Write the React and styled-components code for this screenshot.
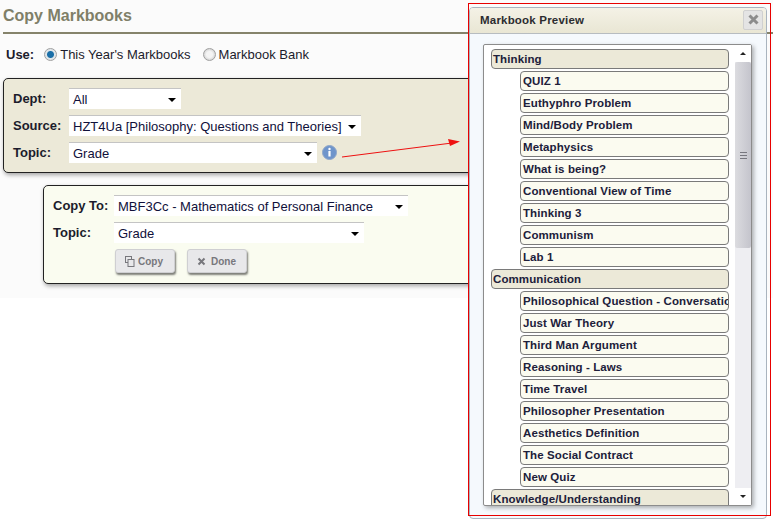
import styled, { createGlobalStyle } from 'styled-components';

const GlobalStyle = createGlobalStyle`
  html, body {
    margin: 0;
    padding: 0;
    background: #ffffff;
    font-family: "Liberation Sans", Arial, sans-serif;
    color: #1c1c2c;
  }
`;

const Page = styled.div`
  position: relative;
  width: 773px;
  height: 522px;
  overflow: hidden;
`;

const Content = styled.div`
  height: 298px;
  padding: 7px 0 0 3px;
  box-sizing: border-box;
  background: #fbfbfb;
`;

const Title = styled.h1`
  margin: 0;
  padding-bottom: 7px;
  border-bottom: 2px solid #85836b;
  font-size: 16px;
  line-height: 18px;
  font-weight: bold;
  color: #7f7f68;
`;

const UseRow = styled.div`
  display: flex;
  align-items: center;
  height: 20px;
  margin: 10px 0 14px 3px;
  font-size: 13px;
`;

const UseLabel = styled.span`
  font-weight: bold;
  font-size: 13px;
  margin-right: 10px;
`;

const Radio = styled.span`
  width: 11px;
  height: 11px;
  border-radius: 50%;
  margin-right: 3px;
  border: 1px solid #a0a0a0;
  background: ${p => (p.$checked ? 'radial-gradient(circle, #1a6fa8 0 3px, #dfe6ea 4px)' : 'radial-gradient(circle, #f4f4f4 0 3px, #d2d2d2 6px)')};
`;

const RadioText = styled.span`
  margin-right: 12px;
`;

const SourcePanel = styled.div`
  width: 600px;
  height: 95px;
  box-sizing: border-box;
  padding: 9px 0 0 9px;
  background: #ece9d8;
  border: 1px solid #222222;
  border-radius: 5px;
  box-shadow: 1px 2px 4px rgba(0, 0, 0, 0.35);
`;

const CopyPanel = styled.div`
  width: 600px;
  height: 99px;
  box-sizing: border-box;
  margin: 12px 0 0 40px;
  padding: 9px 0 0 9px;
  background: #fafcf0;
  border: 1px solid #222222;
  border-radius: 5px;
  box-shadow: 1px 2px 4px rgba(0, 0, 0, 0.35);
`;

const Row = styled.div`
  display: flex;
  align-items: center;
  height: 21px;
  margin-bottom: 6px;
`;

const Label = styled.label`
  width: ${p => p.$width}px;
  flex: none;
  font-size: 13px;
  font-weight: bold;
  color: #1c1c2c;
`;

const Select = styled.div`
  position: relative;
  display: flex;
  align-items: center;
  width: ${p => p.$width}px;
  height: 21px;
  box-sizing: border-box;
  padding-left: 4px;
  background: #ffffff;
  border-top: 1px solid #c4c4c4;
  font-size: 13px;
  color: #10103a;
  white-space: nowrap;
  &::after {
    content: '';
    position: absolute;
    right: 5px;
    top: 9px;
    border-left: 4px solid transparent;
    border-right: 4px solid transparent;
    border-top: 4px solid #000000;
  }
`;

const InfoIcon = styled.svg`
  margin-left: 5px;
  flex: none;
`;

const Buttons = styled.div`
  display: flex;
  gap: 12px;
  margin: 1px 0 0 62px;
`;

const Button = styled.button`
  display: flex;
  align-items: center;
  gap: ${p => p.$gap}px;
  width: 60px;
  height: 24px;
  padding: 0 0 0 9px;
  background: #e8e8ea;
  border: 1px solid #cfcfd2;
  border-radius: 3px;
  box-shadow: 1px 2px 2px rgba(0, 0, 0, 0.5);
  font-family: inherit;
  font-size: 10px;
  font-weight: bold;
  color: #77777c;
`;

const Arrow = styled.svg`
  position: absolute;
  left: 340px;
  top: 136px;
`;

const Dialog = styled.div`
  position: absolute;
  left: 469px;
  top: 7px;
  width: 298px;
  height: 512px;
  box-sizing: border-box;
  background: #f5f9fd;
  border: 1px solid #a9b4bf;
  border-radius: 4px;
`;

const Highlight = styled.div`
  position: absolute;
  left: 468px;
  top: 3px;
  width: 303px;
  height: 513px;
  box-sizing: border-box;
  border: 1px solid #e80000;
  pointer-events: none;
`;

const DialogHeader = styled.div`
  display: flex;
  align-items: center;
  justify-content: space-between;
  height: 26px;
  box-sizing: border-box;
  padding: 0 3px 2px 10px;
  background: linear-gradient(#f4f2e6, #e9e6d4);
  border-bottom: 1px solid #b7bcc0;
  border-radius: 3px 3px 0 0;
  font-size: 11.5px;
  font-weight: bold;
  letter-spacing: 0.2px;
  color: #2c2c30;
`;

const CloseButton = styled.button`
  display: flex;
  align-items: center;
  justify-content: center;
  width: 20px;
  height: 20px;
  padding: 0;
  background: #e4e4e4;
  border: 1px solid #d0d0d0;
  border-radius: 2px;
`;

const ListBox = styled.div`
  display: flex;
  width: 269px;
  height: 462px;
  margin: 10px 0 0 13px;
  box-sizing: border-box;
  background: #ffffff;
  border: 1px solid #8c8c8c;
  border-radius: 2px;
  box-shadow: 2px 2px 4px rgba(0, 0, 0, 0.3);
  overflow: hidden;
`;

const ListScroll = styled.div`
  flex: 1;
  min-width: 0;
  padding: 4px 6px 0 7px;
  overflow: hidden;
`;

const ListRow = styled.div`
  display: flex;
  align-items: center;
  height: 20px;
  box-sizing: border-box;
  margin: 0 0 2px ${p => (p.$group ? 0 : 29)}px;
  padding-left: ${p => (p.$group ? 1 : 2)}px;
  background: ${p => (p.$group ? '#ece9d8' : '#fbfbf0')};
  border: 1px solid #7a7a7a;
  border-radius: 4px;
  font-size: 11.5px;
  font-weight: bold;
  letter-spacing: 0.1px;
  color: #20203a;
  white-space: nowrap;
  overflow: hidden;
`;

const Scrollbar = styled.div`
  display: flex;
  flex-direction: column;
  width: 16px;
  flex: none;
  background: #eeeef2;
`;

const ScrollButton = styled.div`
  display: flex;
  align-items: center;
  justify-content: center;
  height: 17px;
  flex: none;
  background: #ffffff;
  &::after {
    content: '';
    border-left: 3px solid transparent;
    border-right: 3px solid transparent;
    ${p => (p.$up ? 'border-bottom: 3px solid #222;' : 'border-top: 3px solid #222;')}
  }
`;

const ScrollThumb = styled.div`
  display: flex;
  align-items: center;
  justify-content: center;
  height: 186px;
  flex: none;
  background: linear-gradient(90deg, #dcdce0, #c4c4cc);
  border-radius: 2px;
  &::after {
    content: '';
    width: 7px;
    height: 5px;
    border-top: 1px solid #77777f;
    border-bottom: 1px solid #77777f;
    background: linear-gradient(#77777f, #77777f) center / 100% 1px no-repeat;
  }
`;

const ScrollSpace = styled.div`
  flex: 1;
`;

const rows = [
  { name: 'Thinking', group: true },
  { name: 'QUIZ 1' },
  { name: 'Euthyphro Problem' },
  { name: 'Mind/Body Problem' },
  { name: 'Metaphysics' },
  { name: 'What is being?' },
  { name: 'Conventional View of Time' },
  { name: 'Thinking 3' },
  { name: 'Communism' },
  { name: 'Lab 1' },
  { name: 'Communication', group: true },
  { name: 'Philosophical Question - Conversation' },
  { name: 'Just War Theory' },
  { name: 'Third Man Argument' },
  { name: 'Reasoning - Laws' },
  { name: 'Time Travel' },
  { name: 'Philosopher Presentation' },
  { name: 'Aesthetics Definition' },
  { name: 'The Social Contract' },
  { name: 'New Quiz' },
  { name: 'Knowledge/Understanding', group: true },
];

export default function App() {
  return (
    <Page>
      <GlobalStyle />
      <Content>
        <Title>Copy Markbooks</Title>
        <UseRow>
          <UseLabel>Use:</UseLabel>
          <Radio $checked />
          <RadioText>This Year's Markbooks</RadioText>
          <Radio />
          <RadioText>Markbook Bank</RadioText>
        </UseRow>
        <SourcePanel>
          <Row>
            <Label $width={56}>Dept:</Label>
            <Select $width={112}>All</Select>
          </Row>
          <Row>
            <Label $width={56}>Source:</Label>
            <Select $width={292}>HZT4Ua [Philosophy: Questions and Theories]</Select>
          </Row>
          <Row>
            <Label $width={56}>Topic:</Label>
            <Select $width={248}>Grade</Select>
            <InfoIcon width="15" height="15" viewBox="0 0 15 15">
              <circle cx="7.5" cy="7.5" r="7" fill="#6f95cb" stroke="#8fa6c8" />
              <circle cx="7.5" cy="4" r="1.2" fill="#ffffff" />
              <rect x="6.4" y="6" width="2.2" height="5.5" fill="#ffffff" />
            </InfoIcon>
          </Row>
        </SourcePanel>
        <CopyPanel>
          <Row>
            <Label $width={61}>Copy To:</Label>
            <Select $width={294}>MBF3Cc - Mathematics of Personal Finance</Select>
          </Row>
          <Row>
            <Label $width={61}>Topic:</Label>
            <Select $width={250}>Grade</Select>
          </Row>
          <Buttons>
            <Button $gap={3}>
              <svg width="10" height="11" viewBox="0 0 10 11" fill="none" stroke="#77777c">
                <rect x="0.5" y="0.5" width="6" height="6" />
                <rect x="3" y="3.5" width="6" height="7" fill="#e8e8ea" />
              </svg>
              Copy
            </Button>
            <Button $gap={5}>
              <svg width="9" height="9" viewBox="0 0 9 9" stroke="#77777c" strokeWidth="2">
                <path d="M1.5 1.5 7.5 7.5M7.5 1.5 1.5 7.5" />
              </svg>
              Done
            </Button>
          </Buttons>
        </CopyPanel>
      </Content>
      <Arrow width="125" height="30" viewBox="0 0 125 30">
        <line x1="2" y1="21" x2="112" y2="7" stroke="#ee1111" strokeWidth="1" />
        <path d="M108 3 120 5.5 110 10Z" fill="#ee1111" />
      </Arrow>
      <Dialog>
        <DialogHeader>
          Markbook Preview
          <CloseButton aria-label="Close">
            <svg width="11" height="11" viewBox="0 0 11 11" stroke="#8c8c8c" strokeWidth="3">
              <path d="M1.5 1.5 9.5 9.5M9.5 1.5 1.5 9.5" />
            </svg>
          </CloseButton>
        </DialogHeader>
        <ListBox>
          <ListScroll>
            {rows.map(row => (
              <ListRow key={row.name} $group={row.group}>{row.name}</ListRow>
            ))}
          </ListScroll>
          <Scrollbar>
            <ScrollButton $up />
            <ScrollThumb />
            <ScrollSpace />
            <ScrollButton />
          </Scrollbar>
        </ListBox>
      </Dialog>
      <Highlight />
    </Page>
  );
}
